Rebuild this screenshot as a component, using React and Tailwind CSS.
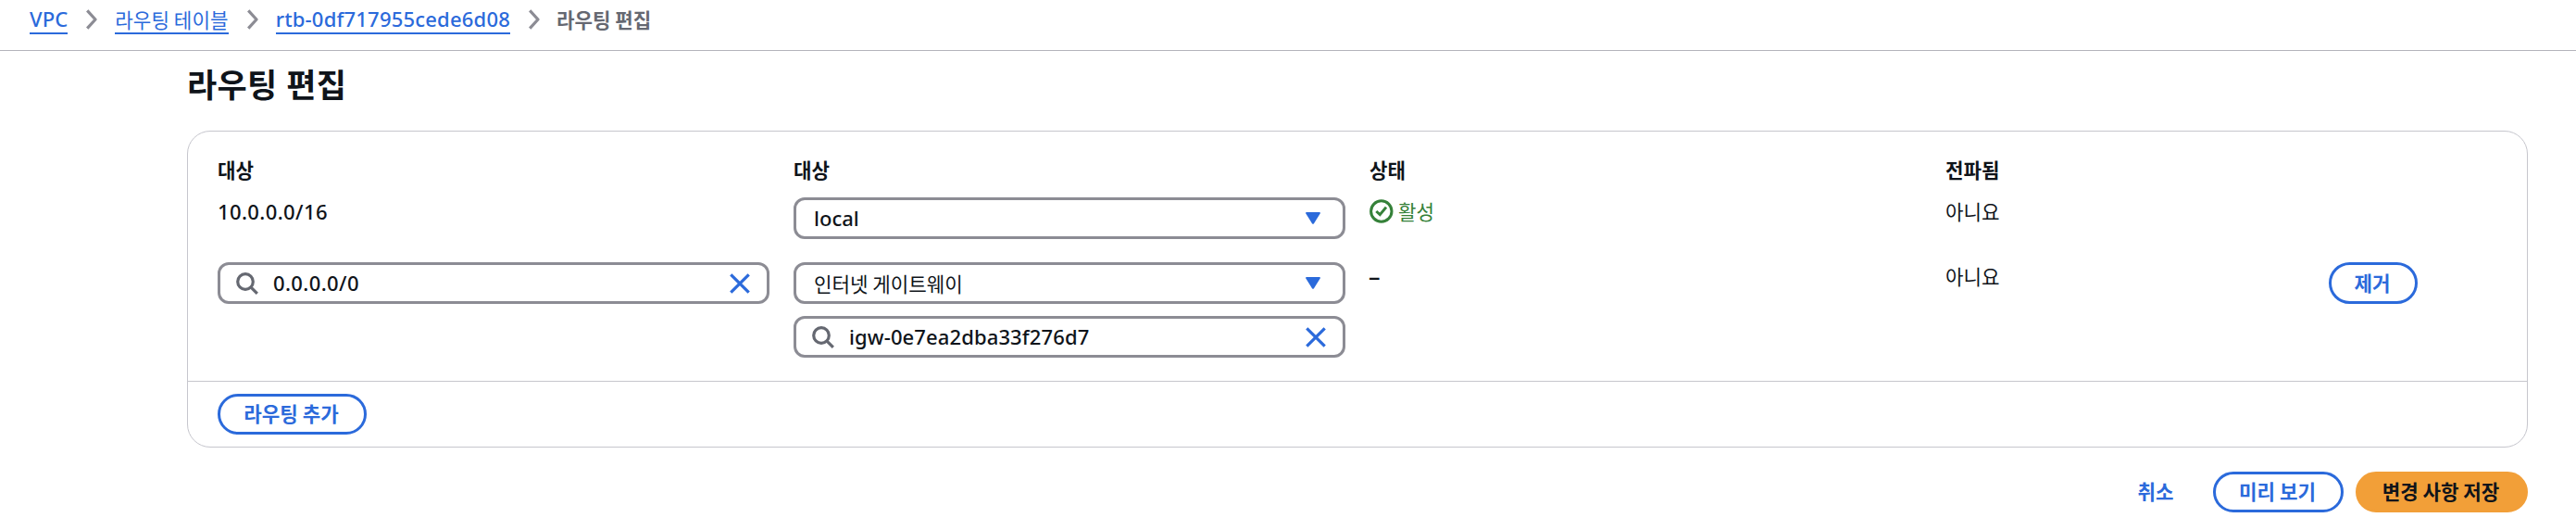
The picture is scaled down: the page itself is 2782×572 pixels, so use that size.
import React from "react";

const Chevron = () => (
  <svg className="h-[22px] w-[12px] shrink-0" viewBox="0 0 12 22" fill="none" stroke="#8c8c94" strokeWidth="3.2" strokeLinejoin="round">
    <path d="M1.2 1.4 10 11 1.2 20.6" />
  </svg>
);

const SearchIcon = () => (
  <svg className="h-[24px] w-[24px] shrink-0" viewBox="0 0 24 24" fill="none" stroke="#656871" strokeWidth="3.2">
    <circle cx="10" cy="10" r="8.3" />
    <path d="M15.8 15.8 22.8 22.8" />
  </svg>
);

const ClearIcon = () => (
  <svg className="h-[22px] w-[22px] shrink-0" viewBox="0 0 22 22" fill="none" stroke="#2b6adb" strokeWidth="3.2">
    <path d="M1.3 1.3 20.7 20.7M20.7 1.3 1.3 20.7" />
  </svg>
);

const Caret = () => (
  <svg className="h-[13px] w-[16px] shrink-0" viewBox="0 0 16 13" fill="#2b6adb">
    <path d="M1 0H15Q16.3 .2 15.7 1.5L9 12.2Q8 13.4 7 12.2L.3 1.5Q-.3 .2 1 0Z" />
  </svg>
);

const StatusIcon = () => (
  <svg className="h-[26px] w-[26px] shrink-0" viewBox="0 0 26 26" fill="none" stroke="#358139" strokeWidth="3">
    <circle cx="12.8" cy="13" r="11.2" />
    <path d="M7.3 13 11.3 16.6 18 8.6" />
  </svg>
);

const LATIN = "font-['Noto_Sans','Noto_Sans_CJK_KR',sans-serif] text-[22px] font-medium";

const LINK = "h-[37px] border-b-2 border-[#2b6adb] text-[#2b6adb]";

function SearchField({ children }) {
  return (
    <div className="flex h-[45px] w-[596px] items-center rounded-[12px] border-[3px] border-[#8c8c94] bg-white pr-[18px] pl-[17px]">
      <SearchIcon />
      <span className={`ml-[16px] flex-1 leading-[39px] ${LATIN}`}>{children}</span>
      <ClearIcon />
    </div>
  );
}

function SelectField({ children }) {
  return (
    <div className="flex h-[45px] w-[596px] items-center justify-between rounded-[12px] border-[3px] border-[#8c8c94] bg-white pr-[24px] pl-[19px]">
      {children}
      <Caret />
    </div>
  );
}

const BUTTON = "flex items-center justify-center rounded-full border-[3px] pr-[2px] pb-[2px] font-bold whitespace-nowrap";

export default function App() {
  return (
    <div className="h-[572px] w-[2782px] overflow-hidden bg-white font-['Noto_Sans_CJK_KR',sans-serif] text-[21.2px] leading-[30px] text-[#0f141a]">
      <nav className="flex h-[55px] items-start border-b border-[#b4b4bb] pl-[32px]">
        <a className={`${LINK} leading-[40px] tracking-[0.1px] ${LATIN}`}>VPC</a>
        <div className="mt-[10px] mr-[19px] ml-[20px]"><Chevron /></div>
        <a className={`${LINK} leading-[41px] tracking-[0.1px]`}>라우팅 테이블</a>
        <div className="mt-[10px] mr-[19px] ml-[20px]"><Chevron /></div>
        <a className={`${LINK} leading-[40px] tracking-[0.2px] ${LATIN}`}>rtb-0df717955cede6d08</a>
        <div className="mt-[10px] mr-[18px] ml-[20px]"><Chevron /></div>
        <span className="leading-[41px] font-bold text-[#656871]">라우팅 편집</span>
      </nav>

      <main className="w-[2730px] pl-[202px]">
        <h1 className="h-[86px] pt-[11px] text-[35px] leading-[48px] font-bold tracking-[0.3px] [word-spacing:1.5px]">라우팅 편집</h1>

        <section className="h-[342px] rounded-[25px] border border-[#c6c6cd]">
          <div className="h-[270px] border-b border-[#c6c6cd] pt-[26px] pl-[32px]">
            <div className="grid grid-cols-[622px_622px_622px_414px_auto] font-bold">
              <span>대상</span>
              <span>대상</span>
              <span>상태</span>
              <span>전파됨</span>
            </div>
            <div className="mt-[15px] grid h-[70px] grid-cols-[622px_622px_622px_414px_auto] items-start">
              <span className={`leading-[30px] tracking-[0.4px] ${LATIN}`}>10.0.0.0/16</span>
              <SelectField>
                <span className={`pb-[2px] ${LATIN}`}>local</span>
              </SelectField>
              <span className="flex items-center gap-[5px] text-[#358139]">
                <StatusIcon />
                활성
              </span>
              <span>아니요</span>
            </div>
            <div className="grid grid-cols-[622px_622px_622px_414px_auto] items-start">
              <SearchField>
                <span className="tracking-[0.4px]">0.0.0.0/0</span>
              </SearchField>
              <div className="flex flex-col gap-[13px]">
                <SelectField>
                  <span>인터넷 게이트웨이</span>
                </SelectField>
                <SearchField>
                  <span className="tracking-[0.12px]">igw-0e7ea2dba33f276d7</span>
                </SearchField>
              </div>
              <span className="-ml-px font-['Noto_Sans',sans-serif] text-[25px] font-medium">–</span>
              <span>아니요</span>
              <button className={`${BUTTON} h-[45px] w-[96px] border-[#2b6adb] text-[#2b6adb]`}>제거</button>
            </div>
          </div>
          <div className="pt-[13px] pl-[32px]">
            <button className={`${BUTTON} h-[44px] w-[161px] border-[#2b6adb] text-[#2b6adb]`}>라우팅 추가</button>
          </div>
        </section>

        <div className="mt-[26px] flex justify-end gap-[13px]">
          <button className={`${BUTTON} mr-[6px] h-[44px] w-[84px] border-transparent text-[#2b6adb]`}>취소</button>
          <button className={`${BUTTON} h-[44px] w-[141px] border-[#2b6adb] text-[#2b6adb]`}>미리 보기</button>
          <button className={`${BUTTON} h-[44px] w-[186px] border-[#f29f38] bg-[#f29f38]`}>변경 사항 저장</button>
        </div>
      </main>
    </div>
  );
}
